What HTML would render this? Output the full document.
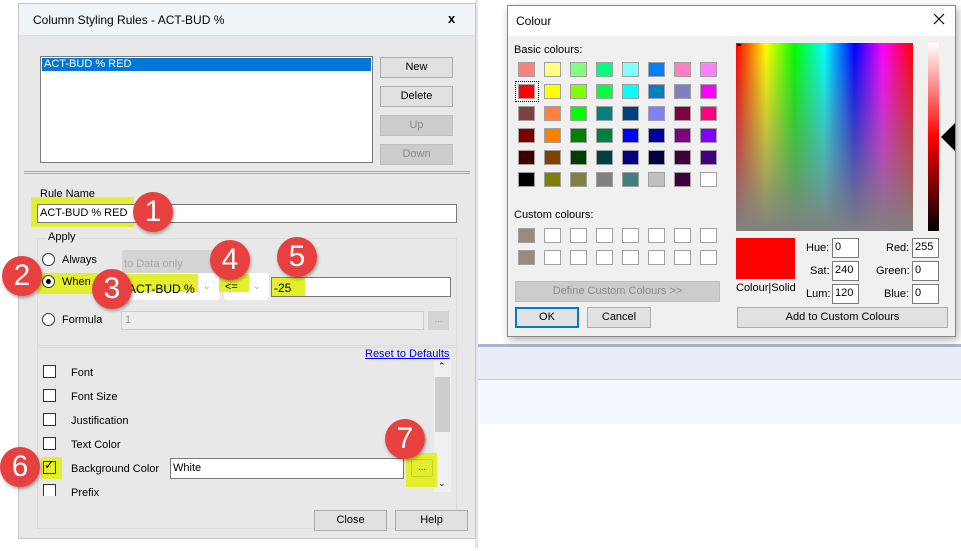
<!DOCTYPE html>
<html><head><meta charset="utf-8"><style>
*{box-sizing:border-box;margin:0;padding:0}
body{width:961px;height:551px;overflow:hidden;background:#fff;font-family:"Liberation Sans",sans-serif;font-size:11px;color:#000;position:relative}
.a{position:absolute}
.btn{position:absolute;background:#e1e1e1;border:1px solid #adadad;text-align:center;font-size:11px}
.dis{color:#8a8a8a;background:#cccccc;border-color:#bfbfbf}
.inp{position:absolute;background:#fff;border:1px solid #7a7a7a}
.hl{position:absolute;background:#e3ee2e}
.c{position:absolute;width:40px;height:40px;border-radius:50%;background:#e8403f;color:#fff;font-size:30px;text-align:center;line-height:40px;box-shadow:1px 2px 3px rgba(0,0,0,.35)}
.rad{position:absolute;width:13px;height:13px;border-radius:50%;border:1px solid #333;background:#fff}
.cb{position:absolute;width:13px;height:13px;border:1px solid #333;background:#fff}
.sw{position:absolute;width:17px;height:15px;border:1px solid #a0a0a0}
</style></head><body>
<div class="a" style="left:475px;top:0;width:3px;height:548px;background:#e4e4e4"></div>
<div class="a" style="left:478px;top:344px;width:483px;height:3px;background:#a9b6cf"></div>
<div class="a" style="left:478px;top:347px;width:483px;height:33px;background:#e9edf8"></div>
<div class="a" style="left:478px;top:379px;width:483px;height:1px;background:#c4c8d2"></div>
<div class="a" style="left:478px;top:380px;width:483px;height:44px;background:#f5f8fe"></div>

<div class="a" style="left:18px;top:3px;width:458px;height:536px;background:#e8e8e8;border:1px solid #c8c8c8"></div>
<div class="a" style="left:19px;top:4px;width:456px;height:32px;background:#f0f4f9;border-bottom:1px solid #dde"></div>
<div class="a" style="left:33px;top:13px;font-size:12px">Column Styling Rules - ACT-BUD %</div>
<div class="a" style="left:448px;top:11px;font-size:13px;font-weight:bold">x</div>
<div class="a" style="left:40px;top:56px;width:333px;height:107px;background:#fff;border:1px solid #7a7a7a"></div>
<div class="a" style="left:42px;top:58px;width:329px;height:13px;background:#0078d7;color:#fff;padding-left:2px;line-height:13px">ACT-BUD % RED</div>
<div class="btn" style="left:380px;top:57px;width:73px;height:21px;line-height:19px">New</div>
<div class="btn" style="left:380px;top:86px;width:73px;height:21px;line-height:19px">Delete</div>
<div class="btn dis" style="left:380px;top:115px;width:73px;height:21px;line-height:19px">Up</div>
<div class="btn dis" style="left:380px;top:144px;width:73px;height:21px;line-height:19px">Down</div>
<div class="a" style="left:24px;top:171px;width:446px;height:3px;border-top:1px solid #aaa;border-bottom:1px solid #aaa"></div>
<div class="a" style="left:40px;top:188px">Rule Name</div>
<div class="hl" style="left:31px;top:197px;width:103px;height:30px"></div>
<div class="inp" style="left:37px;top:204px;width:420px;height:19px"></div>
<div class="a" style="left:40px;top:207px">ACT-BUD % RED</div>
<div class="a" style="left:37px;top:238px;width:420px;height:108px;border:1px solid #dcdcdc;background:#e8e8e8"></div>
<div class="a" style="left:46px;top:231px;background:#e8e8e8;padding:0 2px">Apply</div>
<div class="a" style="left:122px;top:250px;width:92px;height:25px;background:#d4d4d4;border-radius:3px"></div>
<div class="a" style="left:124px;top:258px;color:#a8a8a8">to Data only</div>
<div class="rad" style="left:42px;top:253px"></div>
<div class="a" style="left:62px;top:254px">Always</div>
<div class="hl" style="left:38px;top:273px;width:60px;height:21px"></div>
<div class="rad" style="left:42px;top:275px"></div>
<div class="a" style="left:46px;top:279px;width:5px;height:5px;border-radius:50%;background:#000"></div>
<div class="a" style="left:62px;top:276px">When</div>
<div class="a" style="left:125px;top:273px;width:95px;height:27px;background:#fff;border-radius:3px"></div>
<div class="hl" style="left:126px;top:274px;width:72px;height:18px"></div>
<div class="a" style="left:128px;top:282px;font-size:12px">ACT-BUD %</div>
<div class="a" style="left:203px;top:281px;color:#999;font-size:9px">&#8964;</div>
<div class="a" style="left:224px;top:273px;width:45px;height:27px;background:#fff;border-radius:3px"></div>
<div class="hl" style="left:219px;top:274px;width:30px;height:18px"></div>
<div class="a" style="left:225px;top:281px">&lt;=</div>
<div class="a" style="left:253px;top:281px;color:#999;font-size:9px">&#8964;</div>
<div class="inp" style="left:271px;top:277px;width:180px;height:20px"></div>
<div class="hl" style="left:272px;top:278px;width:33px;height:18px"></div>
<div class="a" style="left:274px;top:281px;font-size:12px">-25</div>
<div class="rad" style="left:42px;top:313px"></div>
<div class="a" style="left:62px;top:314px">Formula</div>
<div class="a" style="left:121px;top:311px;width:303px;height:19px;background:#ececec;border:1px solid #ccc;color:#999;padding:2px 3px">1</div>
<div class="a" style="left:428px;top:311px;width:21px;height:19px;background:#d4d4d4;color:#999;text-align:center;font-size:9px;line-height:17px">...</div>
<div class="a" style="left:37px;top:347px;width:420px;height:182px;border:1px solid #dcdcdc"></div>
<div class="a" style="left:365px;top:348px;color:#0000ee;text-decoration:underline">Reset to Defaults</div>
<div class="a" style="left:434px;top:360px;width:17px;height:132px;background:#f0f0f0"></div>
<div class="a" style="left:435px;top:377px;width:15px;height:55px;background:#cdcdcd"></div>
<div class="a" style="left:438px;top:361px;font-size:9px">&#8963;</div>
<div class="a" style="left:438px;top:478px;font-size:9px">&#8964;</div>
<div class="cb" style="left:43px;top:365px"></div><div class="a" style="left:71px;top:367px">Font</div>
<div class="cb" style="left:43px;top:389px"></div><div class="a" style="left:71px;top:391px">Font Size</div>
<div class="cb" style="left:43px;top:413px"></div><div class="a" style="left:71px;top:415px">Justification</div>
<div class="cb" style="left:43px;top:437px"></div><div class="a" style="left:71px;top:439px">Text Color</div>
<div class="hl" style="left:41px;top:457px;width:21px;height:22px"></div>
<div class="cb" style="left:43px;top:461px;background:transparent"></div>
<div class="a" style="left:44px;top:458px;font-size:12px">&#10003;</div>
<div class="a" style="left:71px;top:463px">Background Color</div>
<div class="inp" style="left:170px;top:458px;width:234px;height:21px;padding:3px 2px">White</div>
<div class="hl" style="left:406px;top:453px;width:31px;height:34px"></div>
<div class="a" style="left:411px;top:459px;width:22px;height:18px;background:#e3ee2e;border:1px solid #c8d020;border-radius:2px;text-align:center;font-size:9px;line-height:14px">...</div>
<div class="a" style="left:38px;top:484px;width:396px;height:12px;overflow:hidden"><div class="cb" style="left:5px;top:0"></div><div class="a" style="left:33px;top:3px">Prefix</div></div>
<div class="btn" style="left:314px;top:510px;width:73px;height:21px;line-height:19px">Close</div>
<div class="btn" style="left:395px;top:510px;width:73px;height:21px;line-height:19px">Help</div>

<div class="c" style="left:133px;top:192px">1</div>
<div class="c" style="left:2px;top:256px">2</div>
<div class="c" style="left:92px;top:269px">3</div>
<div class="c" style="left:210px;top:240px">4</div>
<div class="c" style="left:277px;top:237px">5</div>
<div class="c" style="left:0px;top:447px">6</div>
<div class="c" style="left:385px;top:419px">7</div>

<div class="a" style="left:507px;top:5px;width:449px;height:332px;background:#f0f0f0;border:1px solid #888;box-shadow:2px 3px 8px rgba(0,0,0,.3)"></div>
<div class="a" style="left:508px;top:6px;width:447px;height:30px;background:#fff"></div>
<div class="a" style="left:516px;top:14px;font-size:12px">Colour</div>
<svg class="a" style="left:933px;top:13px" width="12" height="12"><path d="M1 1L11 11M11 1L1 11" stroke="#000" stroke-width="1.2"/></svg>
<div class="a" style="left:514px;top:44px">Basic colours:</div>
<div id="basic"></div>
<div class="a" style="left:514px;top:209px">Custom colours:</div>
<div class="a" style="left:736px;top:43px;width:177px;height:188px;background:linear-gradient(to bottom,rgba(128,128,128,0),#808080),linear-gradient(to right,#f00,#ff0 17%,#0f0 33%,#0ff 50%,#00f 67%,#f0f 83%,#f00)"></div>
<div class="a" style="left:737px;top:44px;width:4px;height:2px;background:#000"></div>
<div class="a" style="left:928px;top:43px;width:11px;height:188px;background:linear-gradient(to bottom,#fff,#f00 50%,#000)"></div>
<div class="a" style="left:941px;top:123px;width:0;height:0;border-top:14px solid transparent;border-bottom:14px solid transparent;border-right:14px solid #000"></div>
<div class="a" style="left:736px;top:238px;width:59px;height:41px;background:#f00"></div>
<div class="a" style="left:736px;top:282px">Colour|Solid</div>
<div class="a" style="left:806px;top:242px">Hue:</div><div class="inp" style="left:832px;top:238px;width:27px;height:20px;padding:2px">0</div>
<div class="a" style="left:810px;top:265px">Sat:</div><div class="inp" style="left:832px;top:261px;width:27px;height:20px;padding:2px">240</div>
<div class="a" style="left:806px;top:288px">Lum:</div><div class="inp" style="left:832px;top:284px;width:27px;height:20px;padding:2px">120</div>
<div class="a" style="left:886px;top:242px">Red:</div><div class="inp" style="left:912px;top:238px;width:27px;height:20px;padding:2px">255</div>
<div class="a" style="left:876px;top:265px">Green:</div><div class="inp" style="left:912px;top:261px;width:27px;height:20px;padding:2px">0</div>
<div class="a" style="left:884px;top:288px">Blue:</div><div class="inp" style="left:912px;top:284px;width:27px;height:20px;padding:2px">0</div>
<div class="btn dis" style="left:515px;top:281px;width:205px;height:21px;line-height:19px">Define Custom Colours &gt;&gt;</div>
<div class="btn" style="left:515px;top:307px;width:64px;height:21px;line-height:17px;border:2px solid #0078d7">OK</div>
<div class="btn" style="left:587px;top:307px;width:64px;height:21px;line-height:19px">Cancel</div>
<div class="btn" style="left:737px;top:307px;width:211px;height:21px;line-height:19px">Add to Custom Colours</div>
<div class="a" style="left:515px;top:81px;width:24px;height:21px;border:1px dotted #000"></div>
<script>
var c=["#FF8080","#FFFF80","#80FF80","#00FF80","#80FFFF","#0080FF","#FF80C0","#FF80FF","#FF0000","#FFFF00","#80FF00","#00FF40","#00FFFF","#0080C0","#8080C0","#FF00FF","#804040","#FF8040","#00FF00","#008080","#004080","#8080FF","#800040","#FF0080","#800000","#FF8000","#008000","#008040","#0000FF","#0000A0","#800080","#8000FF","#400000","#804000","#004000","#004040","#000080","#000040","#400040","#400080","#000000","#808000","#808040","#808080","#408080","#C0C0C0","#400040","#FFFFFF"];
var h="";
for(var i=0;i<48;i++){var r=Math.floor(i/8),k=i%8;h+='<div class="sw" style="left:'+(518+k*26)+'px;top:'+(62+r*22)+'px;background:'+c[i]+'"></div>';}
for(var r=0;r<2;r++)for(var k=0;k<8;k++){h+='<div class="sw" style="left:'+(518+k*26)+'px;top:'+(228+r*22)+'px;background:'+(k==0?'#9a8a7a':'#fff')+'"></div>';}
document.getElementById("basic").outerHTML=h;
</script>
</body></html>
